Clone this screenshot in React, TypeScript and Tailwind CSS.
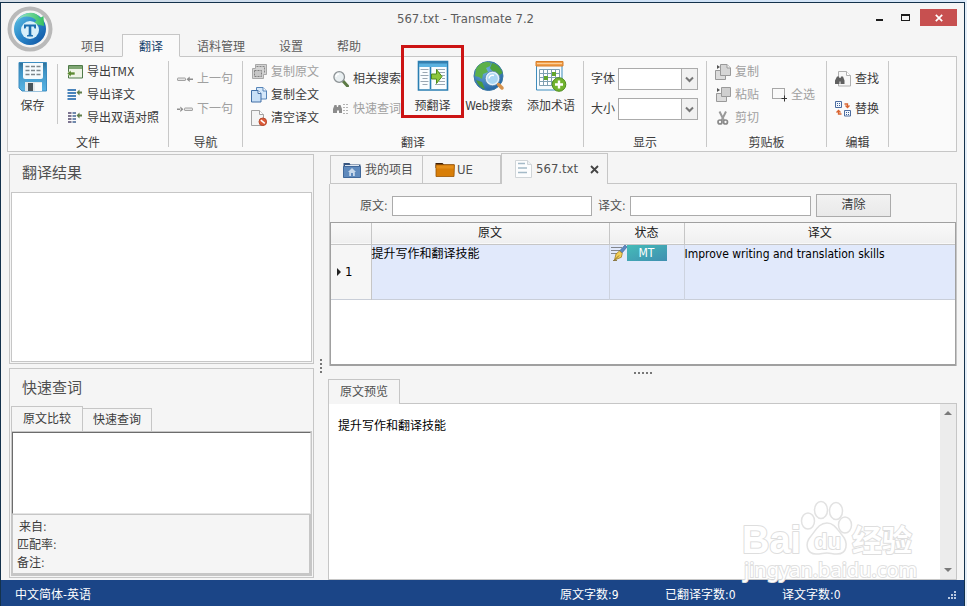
import React from "react";

type P = { children?: React.ReactNode };

function Ico({ children, size = 16 }: P & { size?: number }) {
  return (
    <svg width={size} height={size} viewBox={`0 0 ${size} ${size}`} aria-hidden="true" className="block shrink-0">
      {children}
    </svg>
  );
}

const OrbIcon = () => (
  <svg width="46" height="46" viewBox="0 0 46 46" aria-hidden="true" className="block">
    <defs>
      <linearGradient id="orb" x1="0" y1="0" x2="1" y2="1">
        <stop offset="0" stopColor="#5fc4e6" />
        <stop offset="0.5" stopColor="#2a86c8" />
        <stop offset="1" stopColor="#0c4fa0" />
      </linearGradient>
      <linearGradient id="orbArrow" x1="0" y1="0" x2="1" y2="0">
        <stop offset="0" stopColor="#9fe6c8" />
        <stop offset="1" stopColor="#35c060" />
      </linearGradient>
    </defs>
    <circle cx="23" cy="23" r="20.5" fill="#f4f4f4" stroke="#b9b9b9" strokeWidth="4" />
    <circle cx="23" cy="23" r="16" fill="url(#orb)" />
    <path d="M10 16 C14 6 28 3 33 12 L36.500 10 L37 20 L26 17.500 L29.500 14.500 C24 9 14 9 10 16Z" fill="url(#orbArrow)" />
    <circle cx="23" cy="24" r="9" fill="#d8f0fa" />
    <path d="M17 18.500h12v4h-1.500l-.8-2h-2.400v8.200l1.700.6v1.200h-6v-1.200l1.700-.6v-8.200h-2.400l-.8 2H17z" fill="#1c6fb0" />
  </svg>
);

const SaveIcon = () => (
  <Ico size={32}>
    <defs>
      <linearGradient id="disk" x1="0" y1="0" x2="0" y2="1">
        <stop offset="0" stopColor="#2f6f96" />
        <stop offset="0.3" stopColor="#3f93c4" />
        <stop offset="1" stopColor="#58b4e4" />
      </linearGradient>
    </defs>
    <path d="M2 2.500h27.500V31H5l-3-3z" fill="url(#disk)" stroke="#3c8cc0" />
    <path d="M6 3h20v14a2 2 0 0 1-2 2H8a2 2 0 0 1-2-2z" fill="#f5fafd" />
    <path d="M8.500 6.500h15M8.500 10.500h15M8.500 14.500h15" stroke="#7c868c" strokeWidth="1.400" strokeDasharray="4 1.500" />
    <path d="M8 22h17v9H8z" fill="#e4e8ea" />
    <path d="M11 23h5v8h-5z" fill="#4a545a" />
    <path d="M18 23h7v8h-7z" fill="#fafafa" />
  </Ico>
);

const ExportTmxIcon = () => (
  <Ico>
    <path d="M1.500 1.500h14v12.500h-14z" fill="#eef4e6" stroke="#4f7a48" />
    <path d="M2 2h13v3H2z" fill="#7fa673" />
    <path d="M0 9.500l4-3.500v2h4v3H4v2z" fill="#5c8a31" stroke="#f8fbf4" strokeWidth=".6" />
  </Ico>
);

const PlusMark = () => <path d="M9.500 5.500l3-3v2h2.500v2h-2.500v2z" fill="#5f7d4a" />;

const ExportTextIcon = () => (
  <Ico>
    <path d="M.5 3h8.500M.5 6h8.500M.5 9h8.500M.5 12h8.500" stroke="#4a84bb" strokeWidth="2" />
    <PlusMark />
  </Ico>
);

const ExportBiIcon = () => (
  <Ico>
    <path d="M1 3h3.500M1 6h3.500M1 9h3.500M1 12h3.500" stroke="#7c7490" strokeWidth="2" />
    <path d="M5.500 3H9M5.500 6H9M5.500 9H9M5.500 12H9" stroke="#7089ac" strokeWidth="2" />
    <PlusMark />
  </Ico>
);

const PrevIcon = () => (
  <Ico>
    <rect x=".5" y="7" width="8" height="2.500" rx=".5" fill="#e4e4e4" stroke="#a2a2a2" />
    <path d="M9.500 8.200l3.200-2.700v5.400zM12 7.500h4V9h-4z" fill="#8e8e8e" />
  </Ico>
);

const NextIcon = () => (
  <Ico>
    <rect x="7.500" y="7" width="8" height="2.500" rx=".5" fill="#e4e4e4" stroke="#a2a2a2" />
    <path d="M6.500 8.200L3.300 5.500v5.400zM0 7.500h4V9H0z" fill="#8e8e8e" />
  </Ico>
);

const CopySourceIcon = () => (
  <Ico>
    <path d="M4.500.500h11v10h-3v4h-11v-10h3z" fill="#d2d2d2" stroke="#a8a8a8" />
    <path d="M5.500 2.500h8v6" fill="none" stroke="#888" strokeDasharray="2 1" />
    <path d="M3.500 6.500h7v6h-7z" fill="#c6c6c6" stroke="#808080" strokeDasharray="2 1" />
  </Ico>
);

const CopyAllIcon = () => (
  <Ico>
    <path d="M5.500.500h6.500l3.500 3.500v8h-10z" fill="#d5e8fa" stroke="#5785b8" />
    <path d="M12 .5V4h3.500" fill="#fff" stroke="#5785b8" />
    <path d="M.500 3.500h6.500l3 3v8.500H.500z" fill="#c8e0f7" stroke="#426fa5" />
    <path d="M7 3.500V6.500H10" fill="#fff" stroke="#426fa5" />
  </Ico>
);

const ClearIcon = () => (
  <Ico>
    <path d="M.500.500h8l4 4v11h-12z" fill="#f4f4f4" stroke="#a2a2a2" />
    <path d="M8.500.500V4.500h4" fill="#fff" stroke="#a2a2a2" />
    <circle cx="11.800" cy="11.800" r="3.800" fill="#dc5a38" stroke="#b84a2c" />
    <path d="M9.800 10.200l4 3.200" stroke="#fff" strokeWidth="1.500" />
  </Ico>
);

const MagnifierIcon = () => (
  <Ico>
    <path d="M10 10l4.500 5" stroke="#5c7a45" strokeWidth="3" strokeLinecap="round" />
    <circle cx="6.200" cy="6" r="5.300" fill="#e9eff1" stroke="#8c9295" strokeWidth="1.300" />
    <path d="M3 6a3 3 0 0 1 3-3" stroke="#fff" strokeWidth="1.300" fill="none" />
  </Ico>
);

const LookupIcon = () => (
  <Ico>
    <path d="M1.500 4h2l.5 2h1l.5-2h2l1.500 4v4h-3V9.500H4V12H0V8z" fill="#8c8c8c" />
    <path d="M10 3.500h6M10 6.500h6M10 9.500h6M10 12.500h6" stroke="#b2b2b2" strokeDasharray="2 1" />
  </Ico>
);

const PreTranslateIcon = () => (
  <Ico size={32}>
    <path d="M1.500 1.500h29V30h-29z" fill="#fafdff" stroke="#2b7fb2" strokeWidth="1.600" />
    <path d="M2 2h28v5H2z" fill="#5bb2e0" />
    <path d="M2 1.500h28v2H2z" fill="#357fae" />
    <path d="M13.500 7v22" stroke="#2b7fb2" strokeWidth="1.600" />
    <path d="M3.500 9.500h8M5.500 12.500h5M3.500 15.500h8M5.500 18.500h5M3.500 21.500h8M5.500 24.500h5" stroke="#9aa8b4" />
    <path d="M19 9.500h9M22 12.500h6M24 15.500h4M25 18.500h3M22 21.500h6M18 24.500h10" stroke="#9aa8b4" />
    <path d="M14.500 14h5v-4.500l5.500 7-5.500 7V19h-5z" fill="#8cc63c" stroke="#4f8c1c" />
  </Ico>
);

const WebSearchIcon = () => (
  <Ico size={32}>
    <defs>
      <radialGradient id="globe" cx=".4" cy=".3" r=".8">
        <stop offset="0" stopColor="#6fb2e0" />
        <stop offset="1" stopColor="#1d5c9c" />
      </radialGradient>
    </defs>
    <circle cx="15.500" cy="16" r="14.500" fill="url(#globe)" stroke="#3a78a4" />
    <path d="M3 9C7 2 14 1 18 3l-1 3-4 2 2 4-5 2-1 5-3-2-4-1z" fill="#5cb04a" />
    <path d="M19 3c5 1 9 5 10.500 10L25 16l-5-4-3-4z" fill="#4ea23e" />
    <path d="M3 20l6 2 3 7c-4-1-7-4-9-9z" fill="#4a9a3a" />
    <circle cx="19.500" cy="18.500" r="6.300" fill="#a9d6f2" stroke="#e4f1fa" strokeWidth="1.800" />
    <circle cx="19.500" cy="18.500" r="7.300" fill="none" stroke="#5d88a8" strokeWidth=".8" />
    <path d="M16 18.500a3.500 3.500 0 0 1 5-3" stroke="#fff" strokeWidth="1.500" fill="none" />
    <path d="M25.500 24.500l3.500 3.500" stroke="#d6924c" strokeWidth="3.500" strokeLinecap="round" />
  </Ico>
);

const AddTermIcon = () => (
  <Ico size={32}>
    <path d="M1.500 2h25.500v28H1.500z" fill="#f6fbfe" stroke="#3f8dbd" />
    <path d="M1 1.500h27V6H1z" fill="#f1a04c" stroke="#d77c26" />
    <path d="M2 3.500h25" stroke="#fbd09c" />
    <path d="M4.500 9.500h20v16h-20zM4.500 13.500h20M4.500 17.500h20M4.500 21.500h20M8.500 9.500v16M12.500 9.500v16M16.500 9.500v16M20.500 9.500v16" fill="#fff" stroke="#7fa0b2" />
    <path d="M17 12h4v4h-4zM9 16h4v4H9z" fill="#62a62c" />
    <circle cx="24" cy="24.500" r="6.800" fill="#72b42e" stroke="#4f8c1c" />
    <path d="M24 20.500v8M20 24.500h8" stroke="#fff" strokeWidth="2.400" />
  </Ico>
);

const CopyGrayIcon = () => (
  <Ico>
    <path d="M5.500.500H12l3.500 3.500v7.500h-10z" fill="#d6d6d6" stroke="#9a9a9a" />
    <path d="M12 .5V4h3.500" fill="#f4f4f4" stroke="#9a9a9a" />
    <path d="M.500 6.500h5v5h5v4h-10z" fill="#dcdcdc" stroke="#999" />
    <path d="M2 1l3 2-3 2z" fill="#555" />
  </Ico>
);

const PasteGrayIcon = () => (
  <Ico>
    <path d="M6.500.500h9v9h-9z" fill="#cfcfcf" stroke="#9a9a9a" />
    <path d="M1.500 6.500h5v3h5v5h-10z" fill="#dcdcdc" stroke="#999" />
    <path d="M2 1l3 2-3 2z" fill="#555" />
  </Ico>
);

const CutIcon = () => (
  <Ico>
    <path d="M4.500 1.500l4.500 9M11 1.500L6.500 10.500" stroke="#9a9a9a" strokeWidth="2" />
    <circle cx="5" cy="12" r="2" fill="none" stroke="#8a8a8a" strokeWidth="1.700" />
    <circle cx="10.500" cy="12" r="2" fill="none" stroke="#8a8a8a" strokeWidth="1.700" />
  </Ico>
);

const SelectAllIcon = () => (
  <Ico>
    <path d="M1.500 1.500h12v10h-12z" fill="none" stroke="#555" strokeDasharray="1 1" />
    <path d="M13.500 8.500v6M10.500 11.500h6" stroke="#333" />
  </Ico>
);

const FindIcon = () => (
  <Ico>
    <path d="M3.500.500h8l4 4v10.500h-12z" fill="#f7f7f7" stroke="#b0b0b0" />
    <path d="M11.500.500V4.500h4" fill="#fff" stroke="#b0b0b0" />
    <path d="M2 5.500h2l.5 1.500h1L6 5.500h2l1.500 4V13h-4v-2.500h-1V13H0V9.500z" fill="#606060" />
  </Ico>
);

const ReplaceIcon = () => (
  <Ico>
    <path d="M.500.500h6v6h-6zM9.500 9.500h6v5.500h-6z" fill="#f2f7fd" stroke="#4c6ca0" />
    <path d="M2 2.500h3M2 4.500h3M11 11.500h3M11 13.500h3" stroke="#3c5f96" strokeDasharray="1 1" />
    <path d="M9.500 3h3v3M10.500 4.500l2 2 2-2" fill="none" stroke="#d96430" strokeWidth="1.300" />
    <path d="M6.500 13h-3v-3M1.500 11.500l2-2 2 2" fill="none" stroke="#d96430" strokeWidth="1.300" />
  </Ico>
);

const HomeFolderIcon = () => (
  <svg width="18" height="16" viewBox="0 0 18 16" aria-hidden="true" className="block shrink-0">
    <path d="M.5 1h6l1 1.500h10v13H.500z" fill="#36557f" />
    <path d="M2 3h14v3H2z" fill="#dfe8f2" />
    <path d="M.5 4.500h17v11H.500z" fill="#5f8abd" stroke="#41689a" />
    <path d="M9 6l4 4h-1.200v4H10v-3H8v3H6.200v-4H5z" fill="#c8d9ec" />
  </svg>
);

const OrangeFolderIcon = () => (
  <svg width="20" height="15" viewBox="0 0 20 15" aria-hidden="true" className="block shrink-0">
    <path d="M.5 1h7l1.500 1.500h10V6H.500z" fill="#3d1f08" />
    <path d="M1 2.800h18.500l-.5 11.700H1z" fill="#d87e08" stroke="#9a5604" strokeWidth=".8" />
    <path d="M1.500 3.500h17v3h-17z" fill="#e48e18" />
  </svg>
);

const DocIcon = () => (
  <svg width="17" height="18" viewBox="0 0 17 18" aria-hidden="true" className="block shrink-0">
    <path d="M.5.500h12l4 4v13H.500z" fill="#fcfdfe" stroke="#d0d5d8" />
    <path d="M12.500.500v4h4" fill="#eef2f4" stroke="#d0d5d8" />
    <path d="M3 3.500h7M3 8h9M3 12.500h9" stroke="#a4bac8" strokeWidth="1.300" />
  </svg>
);

const PenIcon = () => (
  <Ico>
    <path d="M0 2.500h11M0 5.500h9M0 8.500h6" stroke="#82868c" />
    <path d="M14 0l2 2-5 6-2.500-2z" fill="#5d88c0" stroke="#375f96" strokeWidth=".6" />
    <path d="M8.500 6l2.800 2.300-1 4L3.500 15l1.500-6z" fill="#f2cf58" stroke="#a07c20" strokeWidth=".8" />
    <path d="M4 14.500l4-4M2 15.500h4" stroke="#77601e" strokeWidth=".8" />
  </Ico>
);

function SmallButton({ icon, label, disabled, tall }: { icon: React.ReactNode; label: string; disabled?: boolean; tall?: boolean }) {
  return (
    <button
      type="button"
      disabled={disabled}
      className={`flex items-center gap-1 whitespace-nowrap text-xs ${tall ? "h-[30px]" : "h-[23px]"} ${disabled ? "text-[#a0a0a0]" : "text-[#3c3c3c]"}`}
    >
      {icon}
      {label}
    </button>
  );
}

function BigButton({ icon, label, className = "", children }: P & { icon: React.ReactNode; label: string; className?: string }) {
  return (
    <button type="button" className={`relative flex flex-col items-center gap-1 whitespace-nowrap text-xs leading-5 text-[#3c3c3c] ${className}`}>
      {icon}
      <span>{label}</span>
      {children}
    </button>
  );
}

function Group({ label, className = "", children }: P & { label: string; className?: string }) {
  return (
    <section aria-label={label} className="flex shrink-0">
      <div className="flex flex-col">
        <div className={`flex h-[78px] ${className}`}>{children}</div>
        <h2 className="text-center text-xs leading-4 text-[#3c3c3c]">{label}</h2>
      </div>
      <div className="my-1 w-px bg-[#c8c8c8]" />
    </section>
  );
}

function FontSelect({ id, label }: { id: string; label: string }) {
  return (
    <div className="flex h-[30px] items-center gap-[3px]">
      <label htmlFor={id}>{label}</label>
      <div className="relative">
        <select id={id} className="block h-[22px] w-20 appearance-none border border-[#ababab] bg-white" />
        <span className="pointer-events-none absolute inset-y-0 right-0 flex w-[17px] items-center justify-center border border-[#ababab] bg-[#f1f1f1]">
          <svg width="9" height="7" viewBox="0 0 9 7" aria-hidden="true">
            <path d="M1 1.500L4.500 5 8 1.500" fill="none" stroke="#777" strokeWidth="2" />
          </svg>
        </span>
      </div>
    </div>
  );
}

function Ribbon() {
  return (
    <div className="ml-1.5 mr-[7px] flex h-24 shrink-0 border border-[#c6c6c6] bg-[#fafafa]">
      <Group label="文件" className="w-[160px] pt-[3px]">
        <BigButton icon={<SaveIcon />} label="保存" className="w-[49px]" />
        <div className="mt-1 h-[60px] w-px bg-[#c8c8c8]" />
        <div className="ml-[9px] flex flex-col items-start">
          <SmallButton icon={<ExportTmxIcon />} label="导出TMX" />
          <SmallButton icon={<ExportTextIcon />} label="导出译文" />
          <SmallButton icon={<ExportBiIcon />} label="导出双语对照" />
        </div>
      </Group>
      <Group label="导航" className="w-[73px] flex-col items-start pl-2 pt-[7px]">
        <SmallButton icon={<PrevIcon />} label="上一句" disabled tall />
        <SmallButton icon={<NextIcon />} label="下一句" disabled tall />
      </Group>
      <Group label="翻译" className="w-[340px] pl-2 pt-[3px]">
        <div className="flex w-[82px] flex-col items-start">
          <SmallButton icon={<CopySourceIcon />} label="复制原文" disabled />
          <SmallButton icon={<CopyAllIcon />} label="复制全文" />
          <SmallButton icon={<ClearIcon />} label="清空译文" />
        </div>
        <div className="flex w-[68px] flex-col items-start pt-1">
          <SmallButton icon={<MagnifierIcon />} label="相关搜索" tall />
          <SmallButton icon={<LookupIcon />} label="快速查词" disabled tall />
        </div>
        <BigButton icon={<PreTranslateIcon />} label="预翻译" className="w-[63px]">
          <span className="absolute -top-[15px] left-0 h-[73px] w-[63px] border-[3px] border-[#cc1414]" />
        </BigButton>
        <BigButton icon={<WebSearchIcon />} label="Web搜索" className="w-[50px]" />
        <BigButton icon={<AddTermIcon />} label="添加术语" className="ml-2 w-[58px]" />
      </Group>
      <Group label="显示" className="w-[122px] flex-col pl-[7px] pt-[7px] text-xs text-[#3c3c3c]">
        <FontSelect id="font-family" label="字体" />
        <FontSelect id="font-size" label="大小" />
      </Group>
      <Group label="剪贴板" className="w-[119px] gap-3 pl-2 pt-[3px]">
        <div className="flex flex-col items-start">
          <SmallButton icon={<CopyGrayIcon />} label="复制" disabled />
          <SmallButton icon={<PasteGrayIcon />} label="粘贴" disabled />
          <SmallButton icon={<CutIcon />} label="剪切" disabled />
        </div>
        <div className="pt-[23px]">
          <SmallButton icon={<SelectAllIcon />} label="全选" disabled />
        </div>
      </Group>
      <Group label="编辑" className="w-[61px] flex-col items-start pl-2 pt-[7px]">
        <SmallButton icon={<FindIcon />} label="查找" tall />
        <SmallButton icon={<ReplaceIcon />} label="替换" tall />
      </Group>
    </div>
  );
}

function Header() {
  const tabs = ["项目", "翻译", "语料管理", "设置", "帮助"];
  return (
    <header className="flex h-[53px] shrink-0">
      <button type="button" aria-label="Transmate" className="ml-1.5 mt-[3px] size-[46px]">
        <OrbIcon />
      </button>
      <div className="flex min-w-0 flex-1 flex-col pl-[11px]">
        <div className="flex h-[31px]">
          <h1 className="flex-1 text-center text-[13px] leading-[31px] text-[#5c5c5c]">567.txt - Transmate 7.2</h1>
          <div className="mt-1.5 mr-[7px] flex h-[17px]">
            <button type="button" aria-label="最小化" className="flex w-6 items-end justify-center pb-[5px]">
              <span className="h-0.5 w-[7px] bg-[#1c1c1c]" />
            </button>
            <button type="button" aria-label="最大化" className="flex w-[29px] items-center justify-center">
              <span className="h-[7px] w-[9px] border border-t-2 border-[#1c1c1c]" />
            </button>
            <button type="button" aria-label="关闭" className="flex w-[37px] items-center justify-center bg-[#c75050]">
              <svg width="8" height="8" viewBox="0 0 8 8" aria-hidden="true">
                <path d="M.8.8l6.400 6.400M7.200.8L.8 7.200" stroke="#fff" strokeWidth="1.700" />
              </svg>
            </button>
          </div>
        </div>
        <nav className="flex h-[23px] shrink-0">
          {tabs.map((t) => (
            <button
              key={t}
              type="button"
              className={`relative h-[23px] border px-4 pt-0.5 text-xs ${
                t === "翻译" ? "z-10 border-[#c6c6c6] border-b-[#fafafa] bg-[#fafafa] text-[#17426b]" : "border-transparent text-[#5c5c5c]"
              }`}
            >
              {t}
            </button>
          ))}
        </nav>
      </div>
    </header>
  );
}

function LeftColumn() {
  return (
    <aside className="flex w-[305px] shrink-0 flex-col gap-1">
      <section className="flex min-h-0 flex-1 flex-col border border-[#c6c6c6] p-px">
        <h2 className="h-9 shrink-0 pl-[11px] text-[15px] leading-[34px] text-[#505050]">翻译结果</h2>
        <div className="flex-1 border border-[#c6c6c6] bg-white" />
      </section>
      <section className="flex min-h-0 flex-1 flex-col border border-[#c6c6c6] p-px">
        <h2 className="h-9 shrink-0 pl-[11px] text-[15px] leading-[36px] text-[#505050]">快速查词</h2>
        <div className="flex shrink-0 items-end text-xs text-[#3c3c3c]">
          <button type="button" className="h-[25px] border border-b-0 border-[#c6c6c6] px-[11px]">原文比较</button>
          <button type="button" className="-ml-px h-[23px] border border-b-0 border-[#c6c6c6] px-[10px]">快速查询</button>
        </div>
        <div className="flex min-h-0 flex-1 flex-col border border-[#c6c6c6]">
          <textarea aria-label="原文比较" className="block min-h-0 w-full flex-1 resize-none border border-[#e4e4e4] border-l-[#6c6c6c] border-t-[#6c6c6c] bg-white outline-none" />
          <div className="h-[61px] shrink-0 border border-r-2 border-b-2 border-[#c6c6c6] pl-1 pt-[3px] text-xs leading-[18px] text-[#3c3c3c]">
            <p className="pl-0.5">来自:</p>
            <p>匹配率:</p>
            <p>备注:</p>
          </div>
        </div>
      </section>
    </aside>
  );
}

function Editor() {
  return (
    <section className="ml-px flex min-h-0 flex-[213] flex-col">
      <div className="flex h-[31px] shrink-0 items-end text-xs text-[#505050]">
        <button type="button" className="ml-px flex h-[29px] w-[93px] items-center gap-1 border border-[#c6c6c6] pl-3">
          <HomeFolderIcon />
          我的项目
        </button>
        <button type="button" className="flex h-[29px] w-[78px] items-center gap-0.5 border border-l-0 border-[#c6c6c6] pl-3 text-[13px]">
          <OrangeFolderIcon />
          UE
        </button>
        <div className="flex h-[31px] w-[107px] items-center border border-b-0 border-[#c6c6c6] pl-[13px]">
          <button type="button" className="flex items-center gap-1 text-[13px]">
            <DocIcon />
            567.txt
          </button>
          <button type="button" aria-label="关闭标签" className="ml-3">
            <svg width="9" height="9" viewBox="0 0 9 9" aria-hidden="true">
              <path d="M1 1l7 7M8 1L1 8" stroke="#444" strokeWidth="1.800" />
            </svg>
          </button>
        </div>
        <div className="flex-1 self-end border-b border-[#c6c6c6]" />
      </div>
      <div className="flex min-h-0 flex-1 flex-col border-x border-[#c6c6c6]">
        <div className="flex h-[38px] shrink-0 items-center pl-[30px] pt-1.5 text-xs text-[#505050]">
          <label htmlFor="src" className="mr-1 w-7">原文:</label>
          <input id="src" type="text" className="mr-1.5 h-5 w-[200px] border border-[#ababab] bg-white outline-none" />
          <label htmlFor="dst" className="mr-1 w-7">译文:</label>
          <input id="dst" type="text" className="h-5 w-[181px] border border-[#ababab] bg-white outline-none" />
          <button type="button" className="mb-0.5 ml-[5px] h-[23px] w-[75px] border border-[#ababab] bg-gradient-to-b from-[#f2f2f2] to-[#e9e9e9] text-[#3c3c3c]">清除</button>
        </div>
        <div className="min-h-0 flex-1 border border-[#a0a0a0] border-b-2 bg-white">
          <table className="w-full table-fixed border-collapse text-xs">
            <colgroup>
              <col className="w-10" />
              <col className="w-[238px]" />
              <col className="w-[75px]" />
              <col />
            </colgroup>
            <thead>
              <tr className="h-[21px] border-b border-[#c6c6c6] bg-gradient-to-b from-[#f9f9f9] to-[#f0f0f0] text-[#202020]">
                <th aria-label="序号" className="border-r border-[#c6c6c6] p-0" />
                <th className="border-r border-[#c6c6c6] p-0 font-normal">原文</th>
                <th className="border-r border-[#c6c6c6] p-0 font-normal">状态</th>
                <th className="p-0 font-normal">译文</th>
              </tr>
            </thead>
            <tbody>
              <tr className="h-[55px] border-b border-[#c9ced8] bg-[#e1e9fb] align-top leading-[18px] text-black">
                <td className="border-r border-[#c6c6c6] bg-[#f6f6f6] p-0 align-middle text-[13px]">
                  <span className="flex items-center gap-1 pl-1.5">
                    <svg width="4" height="8" viewBox="0 0 4 8" aria-hidden="true"><path d="M0 0l4 4-4 4z" fill="#222" /></svg>
                    1
                  </span>
                </td>
                <td className="border-r border-[#cdd3df] p-0">提升写作和翻译技能</td>
                <td className="border-r border-[#cdd3df] p-0 pl-px">
                  <span className="flex">
                    <PenIcon />
                    <span className="h-4 w-10 bg-gradient-to-br from-[#45bcb8] to-[#3f8fb0] text-center leading-4 text-white">MT</span>
                  </span>
                </td>
                <td className="p-0">Improve writing and translation skills</td>
              </tr>
            </tbody>
          </table>
        </div>
      </div>
    </section>
  );
}

function Watermark() {
  return (
    <svg width="176" height="84" viewBox="0 0 176 84" aria-hidden="true" className="pointer-events-none absolute right-[39px] -bottom-1 z-20">
      <g fill="#fff" stroke="#e2e2e2" strokeWidth="1.500">
        <ellipse cx="67" cy="22" rx="6.500" ry="8" />
        <ellipse cx="80" cy="11" rx="6.500" ry="8.500" />
        <ellipse cx="95" cy="12" rx="6.500" ry="8.500" />
        <ellipse cx="104" cy="26" rx="6.500" ry="8" />
        <path d="M86 24c7 0 10 6 15 12 7 8 5 19-5 19-5 0-6-1-10-1s-6 1-11 1c-9 0-12-10-5-18 5-6 8-13 16-13z" />
      </g>
      <g fill="#fff" stroke="#dedede" strokeWidth="2" paintOrder="stroke" strokeLinejoin="round" className="font-['Liberation_Sans','Noto_Sans_CJK_SC',sans-serif] font-bold">
        <text x="1" y="54" fontSize="38">Bai</text>
        <text x="73" y="50" fontSize="22">du</text>
        <text x="111" y="52" fontSize="30">经验</text>
      </g>
      <text x="3" y="78" fontSize="20" fill="#fff" stroke="#e0e0e0" strokeWidth="2" paintOrder="stroke" className="font-['Noto_Sans',sans-serif]">jingyan.baidu.com</text>
    </svg>
  );
}

function Preview() {
  return (
    <section className="flex min-h-0 flex-[201] flex-col">
      <div className="flex h-[25px] shrink-0 text-xs text-[#505050]">
        <button type="button" className="w-[72px] border border-b-0 border-[#c6c6c6]">原文预览</button>
        <div className="flex-1 border-b border-[#c6c6c6]" />
      </div>
      <div className="relative flex min-h-0 flex-1 border border-t-0 border-[#c6c6c6] bg-white">
        <p className="flex-1 pl-[9px] pt-[13px] text-xs leading-[18px] text-black">提升写作和翻译技能</p>
        <div className="flex w-4 flex-col items-center justify-between bg-[#ececec] py-[6px]">
          <svg width="8" height="5" viewBox="0 0 8 5" aria-hidden="true"><path d="M0 5l4-4 4 4z" fill="#7a7a7a" /></svg>
          <svg width="8" height="5" viewBox="0 0 8 5" aria-hidden="true"><path d="M0 0l4 4 4-4z" fill="#7a7a7a" /></svg>
        </div>
        <Watermark />
      </div>
    </section>
  );
}

function StatusBar() {
  return (
    <footer className="flex h-[26px] shrink-0 items-center bg-[#1b4587] pt-1 pl-[14px] text-xs text-white">
      <span className="flex-1">中文简体-英语</span>
      <span className="w-[105px]">原文字数:9</span>
      <span className="w-[117px]">已翻译字数:0</span>
      <span className="w-[166px]">译文字数:0</span>
      <svg width="9" height="9" viewBox="0 0 9 9" aria-hidden="true" className="mr-[7px]">
        <path d="M6 0h2v2H6zM3 3h2v2H3zM6 3h2v2H6zM0 6h2v2H0zM3 6h2v2H3zM6 6h2v2H6z" fill="#b9c8e0" />
      </svg>
    </footer>
  );
}

export default function App() {
  return (
    <div className="flex h-screen flex-col overflow-hidden bg-[#e4eef8] pr-0.5 font-['DejaVu_Sans_Condensed','Noto_Sans_CJK_SC',sans-serif]">
      <div className="h-0.5 shrink-0 bg-gradient-to-r from-[#d5dde6] via-[#c9def5] to-[#d9e8f8]" />
      <div className="flex min-h-0 flex-1 flex-col border-x border-t border-[#14324c] bg-[#f5f5f5]">
        <Header />
        <Ribbon />
        <main className="flex min-h-0 flex-1 pl-2">
          <div className="flex pt-0.5 pb-0.5">
            <LeftColumn />
          </div>
          <div className="flex w-[14px] shrink-0 items-center justify-center">
            <svg width="2" height="14" viewBox="0 0 2 14" aria-hidden="true">
              <path d="M1 0v14" stroke="#777" strokeWidth="2" strokeDasharray="2 2" />
            </svg>
          </div>
          <div className="mr-[7px] flex min-w-0 flex-1 flex-col pt-px">
            <Editor />
            <div className="flex h-[13px] shrink-0 items-center justify-center">
              <svg width="18" height="2" viewBox="0 0 18 2" aria-hidden="true">
                <path d="M0 1h18" stroke="#777" strokeWidth="2" strokeDasharray="2 2" />
              </svg>
            </div>
            <Preview />
          </div>
        </main>
        <StatusBar />
      </div>
    </div>
  );
}
